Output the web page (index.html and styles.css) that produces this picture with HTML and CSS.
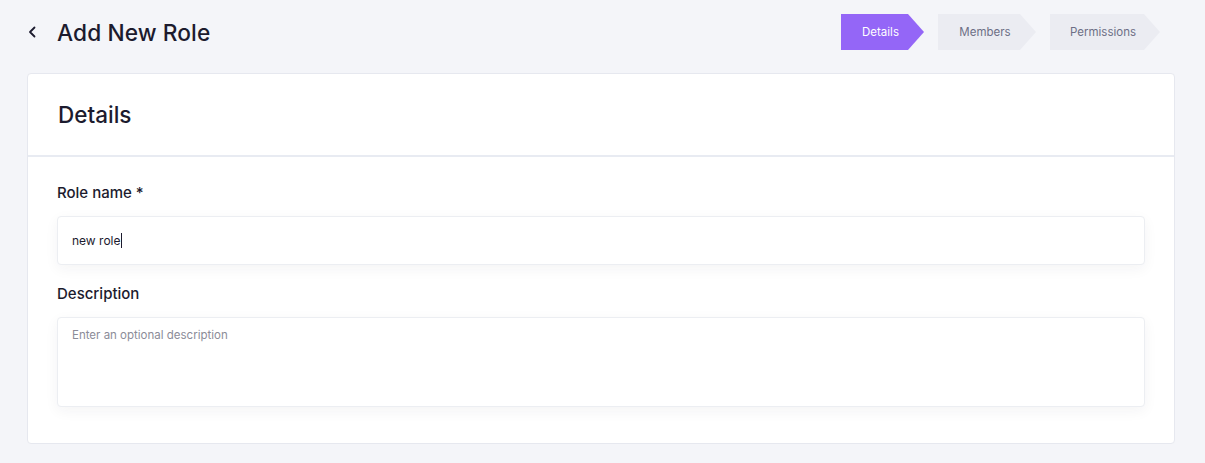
FILE: index.html
```html
<!DOCTYPE html>
<html lang="en">
<head>
<meta charset="utf-8">
<title>Add New Role</title>
<link rel="stylesheet" href="styles.css">
</head>
<body>
<div class="page">
  <header class="topbar">
    <div class="title-group">
      <button class="back" aria-label="Back">
        <svg width="12" height="14" viewBox="0 0 12 14"><path d="M7.5 2.5 L3 7 L7.5 11.5" fill="none" stroke="#1c1b2e" stroke-width="1.8" stroke-linecap="round" stroke-linejoin="round"/></svg>
      </button>
      <h1 class="title">Add New Role</h1>
    </div>
    <nav class="stepper">
      <div class="step step-active">Details</div>
      <div class="step">Members</div>
      <div class="step step-wide">Permissions</div>
    </nav>
  </header>

  <section class="card">
    <div class="card-head">
      <h2 class="card-title">Details</h2>
    </div>
    <div class="card-body">
      <label class="field-label">Role name *</label>
      <div class="input"><span class="input-value">new role</span><span class="caret"></span></div>
      <label class="field-label field-gap">Description</label>
      <div class="textarea"><span class="placeholder">Enter an optional description</span></div>
    </div>
  </section>
</div>
</body>
</html>
```

FILE: styles.css
```css
* { box-sizing: border-box; }
html, body { margin: 0; padding: 0; }
body {
  background: #f4f5f9;
  font-family: Inter, "Open Sans", "Liberation Sans", sans-serif;
  color: #1c1b2e;
  width: 1205px;
  height: 463px;
  overflow: hidden;
}
.page { padding: 0 30px 0 27px; }
.topbar {
  display: flex;
  align-items: center;
  justify-content: space-between;
  height: 64px;
  margin-bottom: 9px;
}
.title-group { display: flex; align-items: center; }
.back {
  border: 0; background: none; padding: 0;
  width: 12px; height: 14px;
  display: flex;
  margin-right: 18px;
}
.title {
  margin: 0;
  font-size: 22.7px;
  font-weight: 500;
  letter-spacing: 0.1px;
  color: #1c1b2e;
}
.stepper { display: flex; gap: 14px; margin-right: 15px; }
.step {
  height: 36px;
  width: 98px;
  padding-right: 4px;
  display: flex;
  align-items: center;
  justify-content: center;
  font-size: 11.5px;
  color: #6d6f86;
  background: #ebecf2;
  clip-path: polygon(0 0, calc(100% - 16px) 0, 100% 50%, calc(100% - 16px) 100%, 0 100%);
}
.step-active { width: 83px; background: #9466f7; color: #ffffff; }
.step-wide { width: 110px; }
.card {
  background: #fff;
  border: 1px solid #e6e8ef;
  border-radius: 4px;
}
.card-head {
  height: 83px;
  padding-left: 30px;
  display: flex;
  align-items: center;
  border-bottom: 2px solid #e8ebf2;
}
.card-title { margin: 0; font-size: 22.5px; font-weight: 500; }
.card-body { padding: 26px 29px 36px 29px; }
.field-label {
  display: block;
  font-size: 15px;
  font-weight: 500;
  line-height: 20px;
  margin-bottom: 13px;
}
.field-gap { margin-top: 19px; }
.input, .textarea {
  background: #fff;
  border: 1px solid #eceef2;
  border-radius: 4px;
  box-shadow: 0 4px 14px rgba(30, 35, 60, 0.05);
  padding: 0 14px;
}
.input {
  height: 49px;
  display: flex;
  align-items: center;
  font-size: 12px;
  color: #1c1b2e;
}
.caret { width: 1px; height: 15px; background: #1c1b2e; margin-left: 1px; }
.textarea {
  height: 90px;
  padding-top: 10px;
  font-size: 11.5px;
}
.placeholder { color: #8b8c98; }
```
